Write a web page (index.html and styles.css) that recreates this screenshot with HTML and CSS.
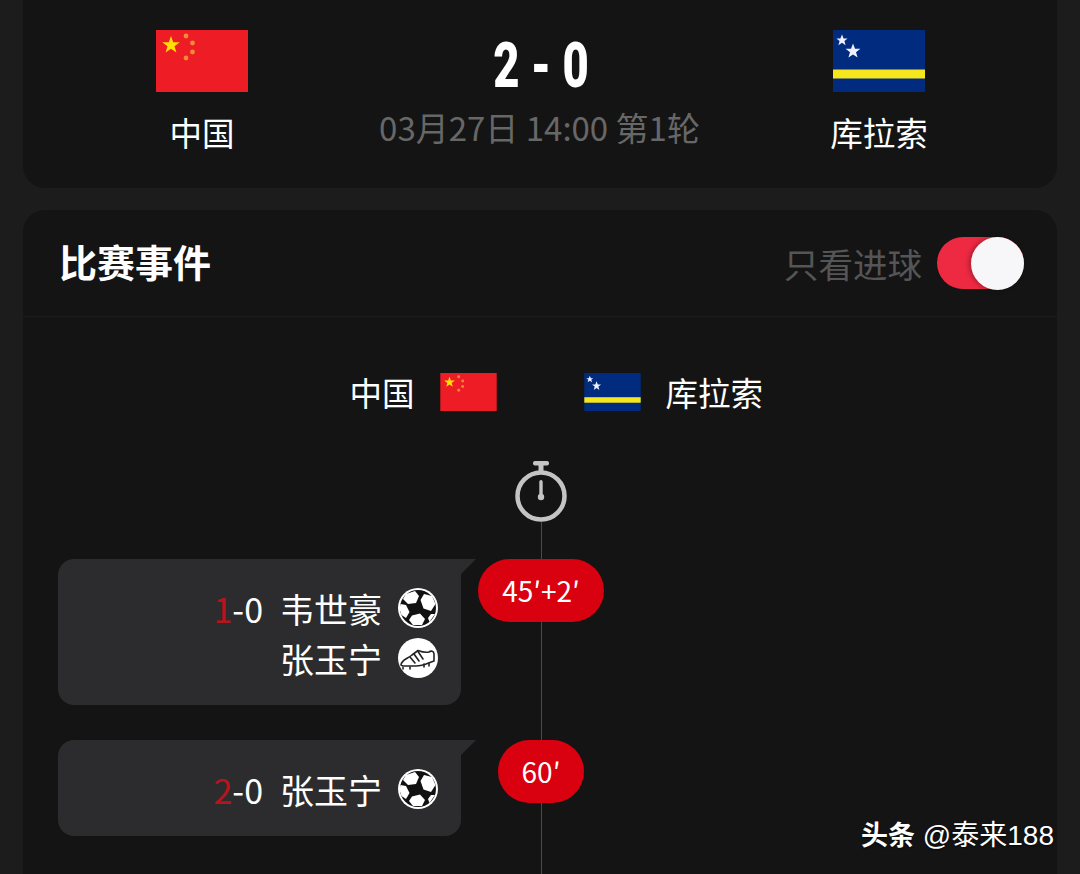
FILE: index.html
```html
<!DOCTYPE html>
<html lang="zh-CN">
<head>
<meta charset="UTF-8" />
<title>比赛事件</title>
<link rel="stylesheet" href="styles.css">
</head>
<body>

<svg class="defs" width="0" height="0">
  <symbol id="flagCn" viewBox="0 0 92 62">
    <rect width="92" height="62" fill="#ee1c25"/>
    <polygon fill="#ffe000" points="15,6 17.2,12.3 23.8,12.3 18.5,16.2 20.4,22.6 15,18.8 9.6,22.6 11.5,16.2 6.2,12.3 12.8,12.3"/>
    <circle cx="30" cy="6" r="2.4" fill="#f08a3a"/>
    <circle cx="36.5" cy="13" r="2.4" fill="#f08a3a"/>
    <circle cx="36.5" cy="22" r="2.4" fill="#f08a3a"/>
    <circle cx="30" cy="28" r="2.4" fill="#f08a3a"/>
  </symbol>
  <symbol id="flagCw" viewBox="0 0 92 62">
    <rect width="92" height="62" fill="#002b7f"/>
    <rect y="39.5" width="92" height="9" fill="#f5e61e"/>
    <polygon fill="#eef0ff" points="9,4.5 10.6,8.4 14.6,8.4 11.4,11 12.6,15.2 9,12.8 5.4,15.2 6.6,11 3.4,8.4 7.4,8.4"/>
    <polygon fill="#eef0ff" points="20,13.5 22,18.7 27.4,18.7 23,22.2 24.6,27.6 20,24.4 15.4,27.6 17,22.2 12.6,18.7 18,18.7"/>
  </symbol>
  <symbol id="ball" viewBox="0 0 40 40">
    <circle cx="20" cy="20" r="20" fill="#fff"/>
    <circle cx="20" cy="20" r="18" fill="#111"/>
    <polygon fill="#fff" points="8,6 17,3 21,8 18,15 10,16 5,11"/>
    <polygon fill="#fff" points="26,6 34,8 37.5,16 33,23 25.5,20.5 22.5,12"/>
    <polygon fill="#fff" points="2.5,16 8,17 11.5,24 8,30 3.5,27 1.5,21"/>
    <polygon fill="#fff" points="14,27.5 22,25.5 27,31 24,37 15,37 11,32"/>
    <polygon fill="#fff" points="33,26 37,26 31.5,34 30,30"/>
  </symbol>
  <symbol id="shoe" viewBox="0 0 40 40">
    <circle cx="20" cy="20" r="20" fill="#fff"/>
    <path d="M3 27 C3 22 9 21 14 17 L20 12.5 C24 14 27 15 31 14 C33 12.5 36 13 36 16 L36 23 C30 25 25 28 18 28 L5 28 Z" fill="none" stroke="#222" stroke-width="1.6" stroke-linejoin="round"/>
    <path d="M12 19 L17 25 M16 16 L21 23 M20 13.5 L25 21 M5 29.5 L5 31 M12 29 L12 31 M26 26 L26 29 M31 25 L31 28" fill="none" stroke="#222" stroke-width="1.6" stroke-linecap="round"/>
  </symbol>
</svg>

<section class="card match">
  <div class="team">
    <svg class="flag"><use href="#flagCn"/></svg>
    <div class="teamName">中国</div>
  </div>
  <div class="center">
    <div class="score">2 - 0</div>
    <div class="date">03月27日 14:00 第1轮</div>
  </div>
  <div class="team">
    <svg class="flag"><use href="#flagCw"/></svg>
    <div class="teamName">库拉索</div>
  </div>
</section>

<section class="card events">
  <header class="eventsHead">
    <h2>比赛事件</h2>
    <div class="goalsOnly">
      <span>只看进球</span>
      <div class="toggle"><div class="knob"></div></div>
    </div>
  </header>

  <div class="timeline">
    <div class="line"></div>

    <div class="sides">
      <div class="side sideLeft">
        <span>中国</span>
        <svg class="flagSmall"><use href="#flagCn"/></svg>
      </div>
      <div></div>
      <div class="side">
        <svg class="flagSmall"><use href="#flagCw"/></svg>
        <span>库拉索</span>
      </div>
    </div>

    <svg class="watch" viewBox="0 0 52 61">
      <rect x="18" y="0" width="16" height="4.5" rx="2" fill="#c4c4c4"/>
      <rect x="23.5" y="3" width="5" height="7" fill="#c4c4c4"/>
      <circle cx="26" cy="35" r="23.5" fill="none" stroke="#c4c4c4" stroke-width="4.5"/>
      <rect x="24.3" y="19" width="3.4" height="17" rx="1.7" fill="#c4c4c4"/>
      <circle cx="26" cy="36" r="3.2" fill="#c4c4c4"/>
    </svg>

    <div class="event">
      <div class="bubble">
        <div class="row">
          <span class="goal"><i>1</i>-0</span>
          <span>韦世豪</span>
          <svg class="icon"><use href="#ball"/></svg>
        </div>
        <div class="row">
          <span>张玉宁</span>
          <svg class="icon"><use href="#shoe"/></svg>
        </div>
      </div>
      <div class="minute"><span class="pill">45′+2′</span></div>
    </div>

    <div class="event">
      <div class="bubble">
        <div class="row">
          <span class="goal"><i>2</i>-0</span>
          <span>张玉宁</span>
          <svg class="icon"><use href="#ball"/></svg>
        </div>
      </div>
      <div class="minute"><span class="pill">60′</span></div>
    </div>
  </div>
</section>

<div class="watermark"><b>头条</b> @泰来188</div>

</body>
</html>
```

FILE: styles.css
```css
* { box-sizing: border-box; }
html, body { height: 874px; overflow: hidden; }
body { margin: 0; padding: 0 23px; background: #1c1c1c; color: #fff; font-family: "Noto Sans CJK SC", "Noto Sans", sans-serif; position: relative; display: flex; flex-direction: column; }
.defs { position: absolute; }

.card { background: #141414; }
.match { height: 188px; flex: none; border-radius: 0 0 22px 22px; display: grid; grid-template-columns: 358px minmax(0, 1fr) 356px; }
.team { display: flex; flex-direction: column; align-items: center; padding-top: 30px; }
.flag { width: 92px; height: 62px; display: block; }
.teamName { font-size: 32.5px; line-height: 46px; margin-top: 17px; }
.center { text-align: center; }
.score { font-family: "Roboto", sans-serif; font-weight: 900; font-size: 63px; line-height: 60px; margin-top: 36px; transform: scaleX(.72); }
.date { color: #676767; font-size: 33px; line-height: 44px; margin-top: 9px; margin-left: -3px; white-space: nowrap; }

.events { margin-top: 22px; flex: 1; min-height: 0; display: flex; flex-direction: column; border-radius: 22px 22px 0 0; }
.eventsHead { height: 107px; flex: none; padding: 0 33px 0 36px; display: flex; align-items: center; justify-content: space-between; border-bottom: 1px solid #1c1c1c; }
.eventsHead h2 { margin: 0 0 5px; font-size: 38px; font-weight: 700; }
.goalsOnly { display: flex; align-items: center; gap: 15px; color: #555; font-size: 34.5px; }
.toggle { width: 87px; height: 52px; border-radius: 26px; background: #ee2a42; position: relative; }
.knob { position: absolute; right: 0; top: 0; width: 53px; height: 53px; border-radius: 50%; background: #f7f7fa; box-shadow: -2px 0 5px rgba(0, 0, 0, .3); }

.timeline { position: relative; flex: 1; padding: 56px 0 0 35px; }
.line { position: absolute; left: 518px; top: 205px; bottom: 0; width: 1px; background: #4a4a4a; }
.sides { display: grid; grid-template-columns: 1fr 87px 1fr; margin-left: -35px; font-size: 32.5px; line-height: 38px; }
.side { display: flex; align-items: center; gap: 25px; }
.sideLeft { justify-content: flex-end; }
.flagSmall { width: 57px; height: 38px; display: block; }
.watch { display: block; width: 52px; height: 61px; margin: 50px 0 37px 457px; }

.event { display: flex; margin-bottom: 35px; position: relative; }
.bubble { width: 403px; padding: 24px 23px 22px 0; background: #2c2c2e; border-radius: 16px 0 16px 16px; position: relative; font-size: 34px; }
.bubble::after { content: ""; position: absolute; left: 100%; top: 0; width: 15px; height: 15px; background: #2c2c2e; clip-path: polygon(0 0, 100% 0, 0 100%); }
.row { display: flex; justify-content: flex-end; align-items: center; height: 50px; }
.goal { margin-right: 17px; }
.goal i { font-style: normal; color: #b8141c; }
.icon { width: 40px; height: 40px; margin-left: 16px; display: block; }
.minute { width: 160px; display: flex; justify-content: center; align-items: flex-start; position: relative; }
.pill { padding: 0 24px; height: 63px; line-height: 63px; border-radius: 32px; background: #d9000f; font-size: 28px; white-space: nowrap; }

.watermark { position: absolute; right: 26px; top: 814px; font-family: "Liberation Sans", "Noto Sans CJK SC", sans-serif; font-size: 28px; line-height: 40px; text-shadow: 0 1px 2px rgba(0, 0, 0, .7); }
.watermark b { font-family: "Noto Sans CJK SC", sans-serif; font-weight: 700; font-size: 27px; }
```
